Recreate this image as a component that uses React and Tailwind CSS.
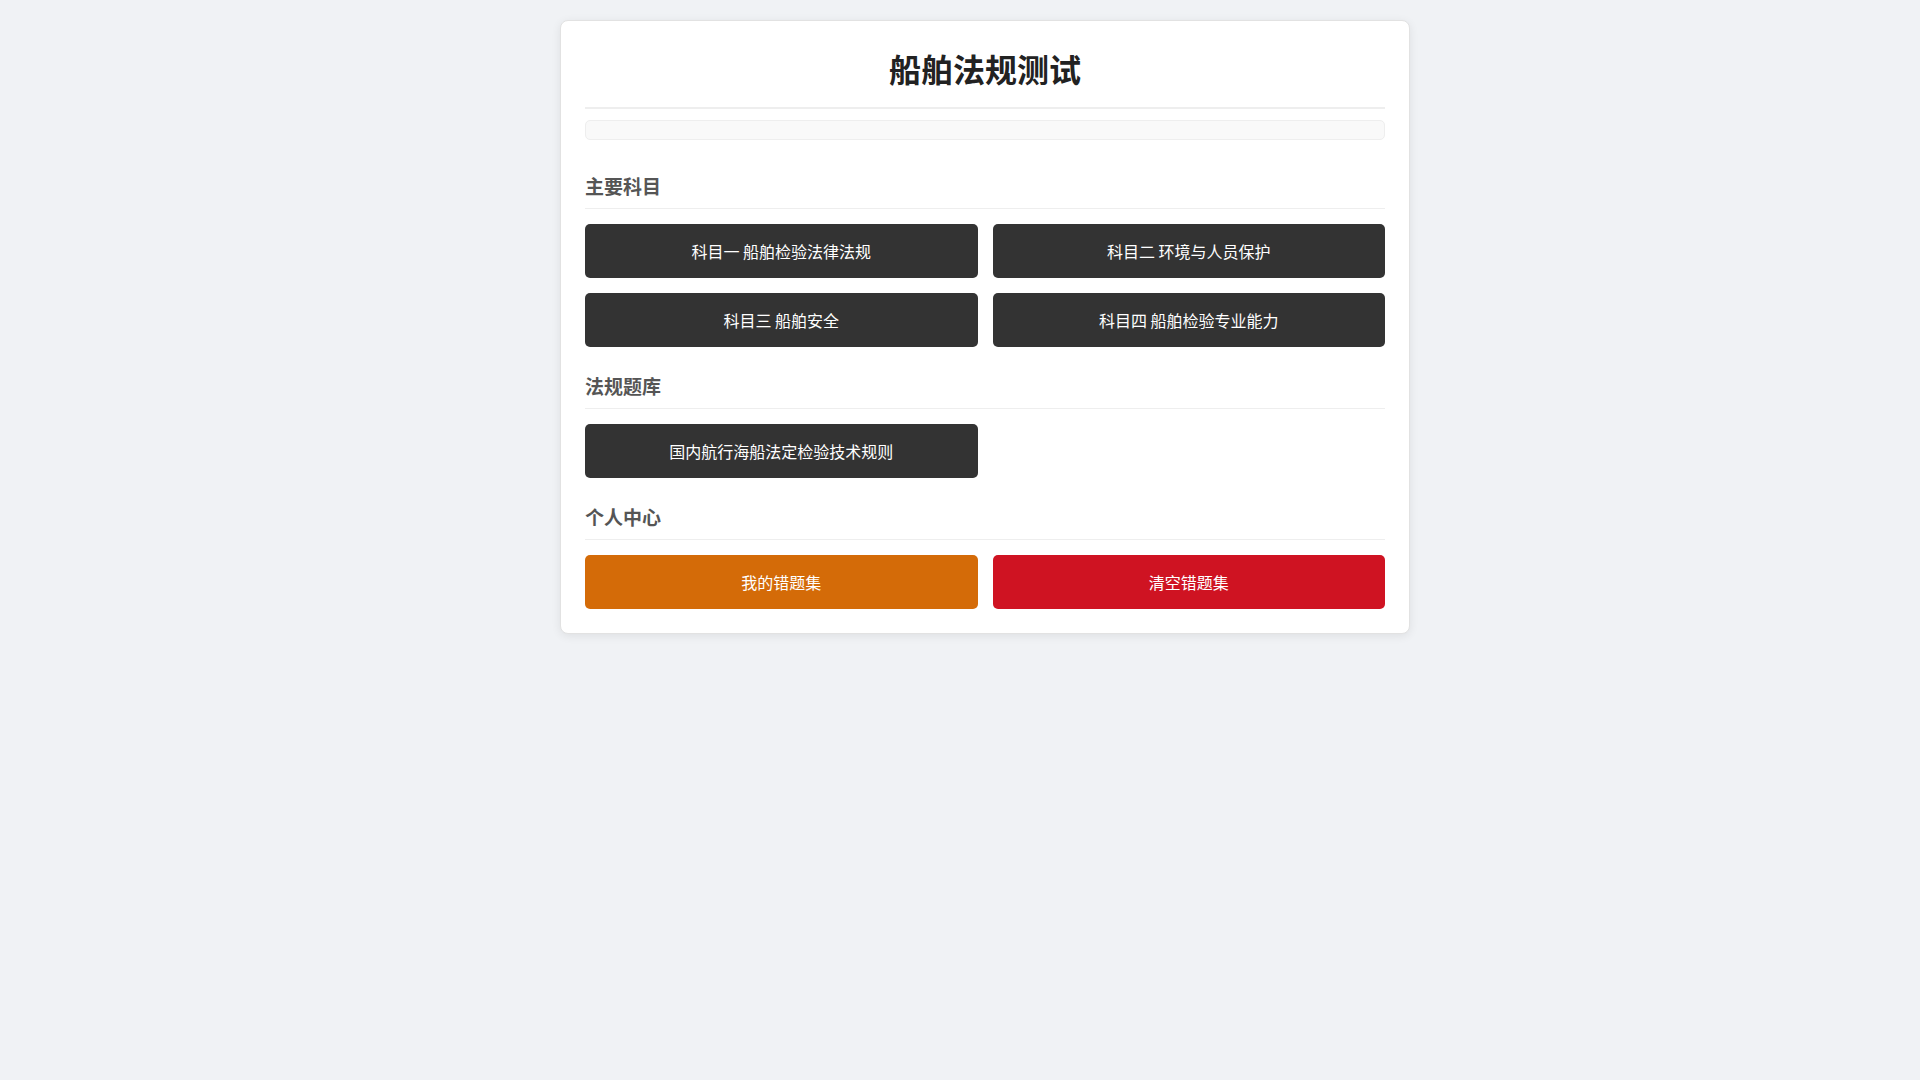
import React from 'react'

const font = { fontFamily: '"Noto Sans CJK SC", "Noto Sans", sans-serif' }

const sections = [
    {
        title: '主要科目',
        items: [
            { label: '科目一 船舶检验法律法规', tone: 'dark' },
            { label: '科目二 环境与人员保护', tone: 'dark' },
            { label: '科目三 船舶安全', tone: 'dark' },
            { label: '科目四 船舶检验专业能力', tone: 'dark' },
        ],
    },
    {
        title: '法规题库',
        items: [{ label: '国内航行海船法定检验技术规则', tone: 'dark' }],
    },
    {
        title: '个人中心',
        items: [
            { label: '我的错题集', tone: 'orange' },
            { label: '清空错题集', tone: 'red' },
        ],
    },
]

const toneClass = {
    dark: 'bg-[#333333] hover:bg-[#444444]',
    orange: 'bg-[#d46b08] hover:bg-[#e07a1a]',
    red: 'bg-[#cf1322] hover:bg-[#db2a38]',
}

const MenuButton = ({ label, tone }) => (
    <button
        className={`h-[54px] w-full rounded-[5px] text-white text-[16px] leading-[22px] flex items-center justify-center cursor-pointer ${toneClass[tone]}`}
    >
        {label}
    </button>
)

const Section = ({ title, items, first }) => (
    <div className={first ? 'mt-[34px]' : 'mt-[27px]'}>
        <h2 className="text-[19px] leading-[24px] font-bold text-[#555555] pb-[10px] border-b border-[#eeeeee]">
            {title}
        </h2>
        <div className="grid grid-cols-2 gap-[15px] mt-[15px]">
            {items.map((item) => (
                <MenuButton key={item.label} {...item} />
            ))}
        </div>
    </div>
)

export default function App() {
    return (
        <div className="min-h-screen bg-[#f0f2f5] pt-5 pl-[50px] flex justify-center items-start" style={font}>
            <div className="w-[850px] bg-white border border-[#e2e2e2] rounded-lg shadow-[0_2px_10px_rgba(0,0,0,0.08)] p-6">
                <h1 className="text-[32px] leading-[46px] font-bold text-[#222222] text-center pb-4 border-b-2 border-[#eeeeee]">
                    船舶法规测试
                </h1>
                <div className="mt-[11px] h-5 bg-[#f9f9f9] border border-[#eeeeee] rounded-[5px]" />
                {sections.map((s, i) => (
                    <Section key={s.title} {...s} first={i === 0} />
                ))}
            </div>
        </div>
    )
}
